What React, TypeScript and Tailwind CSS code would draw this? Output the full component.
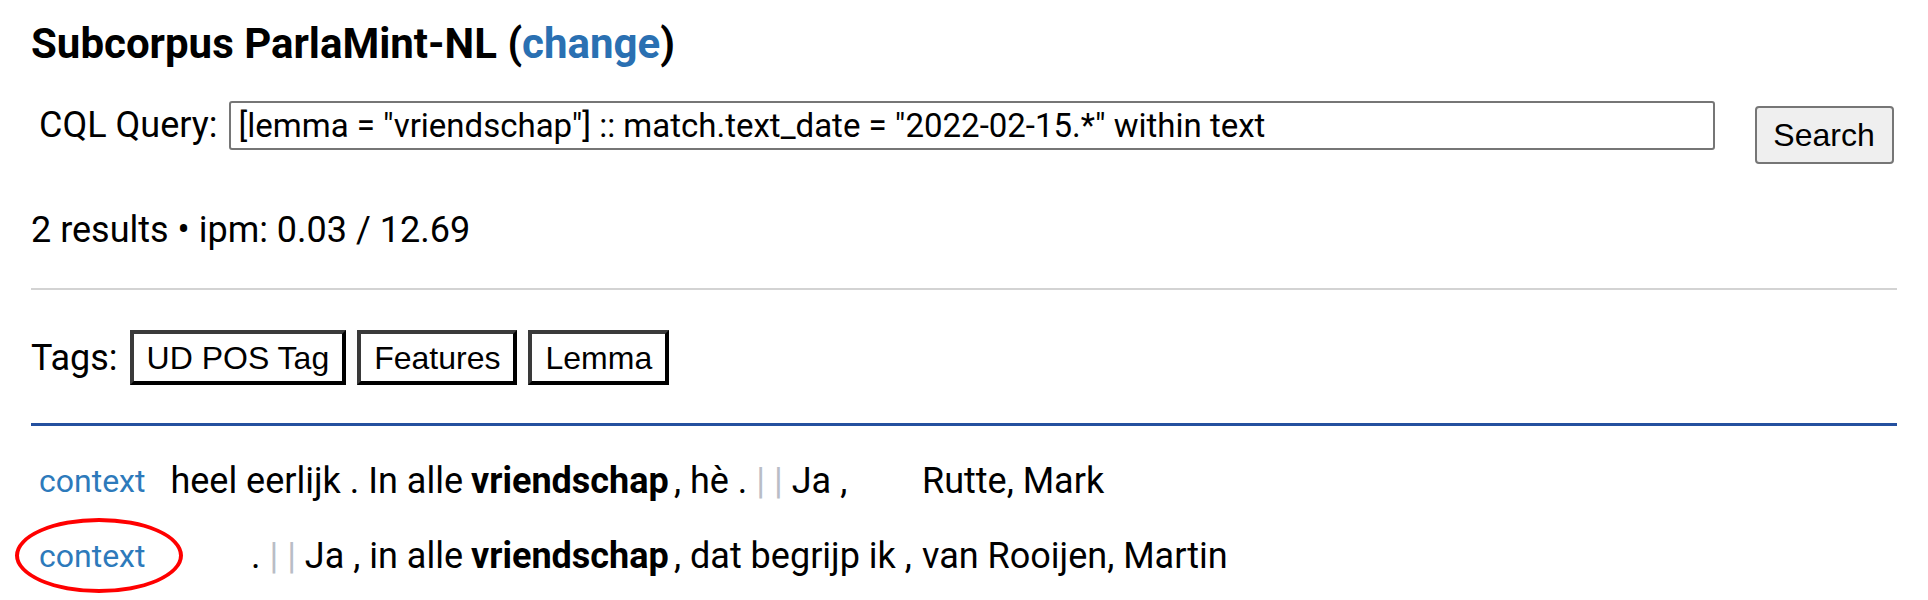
import React from "react";

const query = '[lemma = "vriendschap"] :: match.text_date = "2022-02-15.*" within text';

const tags = ["UD POS Tag", "Features", "Lemma"];

const Sep = () => <span className="text-[#b9bdc6]">|</span>;

interface HitRow {
  left: React.ReactNode;
  match: string;
  right: React.ReactNode;
  speaker: string;
  circled?: boolean;
}

const rows: HitRow[] = [
  {
    left: "heel eerlijk . In alle",
    match: "vriendschap",
    right: (
      <>
        , hè . <Sep /> <Sep /> Ja ,
      </>
    ),
    speaker: "Rutte, Mark",
  },
  {
    left: (
      <>
        . <Sep /> <Sep /> Ja , in alle
      </>
    ),
    match: "vriendschap",
    right: ", dat begrijp ik ,",
    speaker: "van Rooijen, Martin",
    circled: true,
  },
];

export default function App() {
  return (
    <div className="min-h-[600px] bg-white px-[31px] pt-[20px] font-[Roboto,sans-serif] text-black">
      <h2 className="text-[42px] font-bold leading-[48px]">
        Subcorpus ParlaMint-NL (<a className="text-[#2a70b2]">change</a>)
      </h2>

      <form className="mt-[33px] flex items-start" onSubmit={(e) => e.preventDefault()}>
        <label className="flex shrink-0 items-center text-[36px] leading-[49px]">
          <span className="pl-[8px] pr-[11px]">CQL Query:</span>
          <input
            readOnly
            value={query}
            className="h-[49px] w-[1486px] rounded-[3px] border-2 border-[#767676] bg-white px-[8px] font-[Roboto,sans-serif] text-[33px] text-black outline-none"
          />
        </label>
        <button
          type="submit"
          className="ml-[40px] mt-[5px] h-[58px] w-[139px] shrink-0 rounded-[4px] border-2 border-[#767676] bg-[#efefef] font-['Liberation_Sans',Arial,sans-serif] text-[32px] text-black"
        >
          Search
        </button>
      </form>

      <div className="mt-[46px] text-[36px] leading-[40px]">2 results • ipm: 0.03 / 12.69</div>

      <hr className="mt-[38px] border-t-2 border-[#d3d3d3]" />

      <div className="mt-[40px] flex items-center gap-[11px] text-[36px] leading-[40px]">
        <span className="mr-[1px]">Tags:</span>
        {tags.map((t) => (
          <button
            key={t}
            className="h-[55px] border-4 border-b-black border-l-[#3a3a3a] border-r-black border-t-[#3a3a3a] bg-white px-[13px] font-['Liberation_Sans',Arial,sans-serif] text-[32px] text-black"
          >
            {t}
          </button>
        ))}
      </div>

      <div className="mt-[38px] h-[3px] bg-[#24509f]" />

      <div className="mt-[35px] flex flex-col gap-[35px] text-[36px] leading-[40px]">
        {rows.map((r, i) => (
          <div key={i} className="grid grid-cols-[129px_303px_211px_248px_1fr] whitespace-nowrap">
            <div className="relative pl-[8px] text-[32px]">
              <a className="text-[#2d7abb]">context</a>
              {r.circled && (
                <span className="pointer-events-none absolute left-[-16px] top-[-18px] h-[75px] w-[168px] rounded-[50%] border-[4px] border-[#ff0000]" />
              )}
            </div>
            <div className="text-right">{r.left}</div>
            <div className="pl-[8px] font-bold">{r.match}</div>
            <div>{r.right}</div>
            <div>{r.speaker}</div>
          </div>
        ))}
      </div>
    </div>
  );
}
